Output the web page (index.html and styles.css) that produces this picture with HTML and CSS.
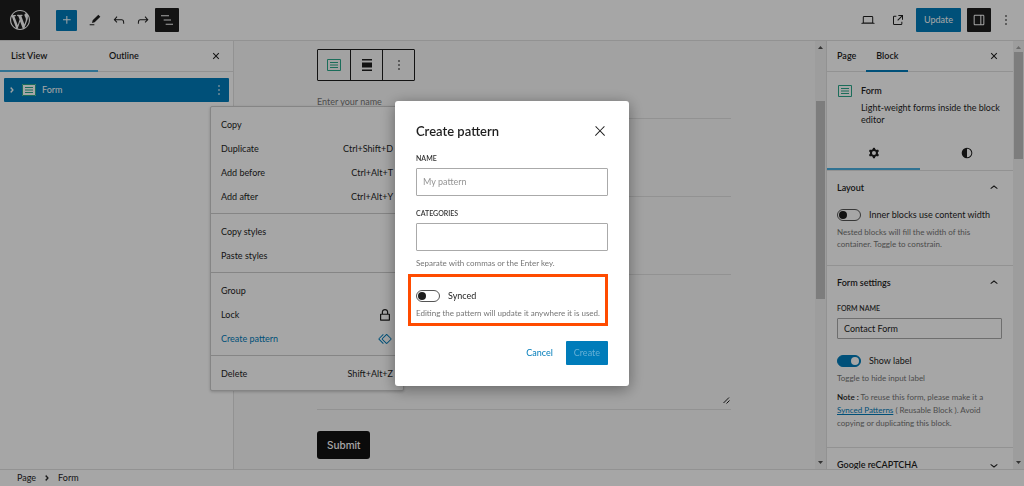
FILE: index.html
```html
<!DOCTYPE html>
<html lang="en">
<head>
<meta charset="utf-8">
<title>Edit Page</title>
<link rel="stylesheet" href="styles.css">
</head>
<body>
<svg class="sprite" aria-hidden="true">
  <symbol id="i-wp" viewBox="0 0 20 20"><path d="M20 10c0-5.51-4.49-10-10-10C4.48 0 0 4.49 0 10c0 5.52 4.48 10 10 10 5.51 0 10-4.48 10-10zM7.78 15.37L4.37 6.22c.55-.02 1.17-.08 1.17-.08.5-.06.44-1.13-.06-1.11 0 0-1.45.11-2.37.11-.18 0-.37 0-.58-.01C4.12 2.69 6.87 1.11 10 1.11c2.33 0 4.45.87 6.05 2.34-.68-.11-1.65.39-1.65 1.58 0 .74.45 1.36.9 2.1.35.61.55 1.36.55 2.46 0 1.49-1.4 5-1.4 5l-3.03-8.37c.54-.02.82-.17.82-.17.5-.05.44-1.25-.06-1.22 0 0-1.44.12-2.38.12-.87 0-2.33-.12-2.33-.12-.5-.03-.56 1.2-.06 1.22l.92.08 1.26 3.41zM17.41 10c.24-.64.74-1.87.43-4.25.7 1.29 1.05 2.71 1.05 4.25 0 3.29-1.73 6.24-4.4 7.78.97-2.59 1.94-5.2 2.92-7.78zM6.1 18.09C3.12 16.65 1.11 13.53 1.11 10c0-1.3.23-2.48.72-3.59C3.25 10.3 4.67 14.2 6.1 18.09zm4.03-6.63l2.58 6.98c-.86.29-1.76.45-2.71.45-.79 0-1.57-.11-2.29-.33.81-2.38 1.62-4.74 2.42-7.1z"/></symbol>
  <symbol id="i-plus" viewBox="0 0 24 24"><path d="M11 12.5V17.5H12.5V12.5H17.5V11H12.5V6H11V11H6V12.5H11Z"/></symbol>
  <symbol id="i-edit" viewBox="0 0 24 24"><path d="m20 7-3-3-8.5 8.5-1 4 4-1L20 7Zm-9 11.5H4V20h7v-1.5Z"/></symbol>
  <symbol id="i-undo" viewBox="0 0 24 24"><path d="M18.3 11.7c-.6-.6-1.4-.9-2.3-.9H6.7l2.9-3.3-1.1-1-4.5 5L8.5 16l1-1-2.7-2.7H16c.5 0 .9.2 1.3.5 1 1 1 3.4 1 4.5v.3h1.5v-.2c0-1.5 0-4.3-1.5-5.7z"/></symbol>
  <symbol id="i-redo" viewBox="0 0 24 24"><path d="M15.6 6.5l-1.1 1 2.9 3.3H8c-.9 0-1.7.3-2.3.9-1.4 1.5-1.4 4.2-1.4 5.6v.2h1.5v-.3c0-1.1 0-3.5 1-4.5.3-.3.7-.5 1.3-.5h9.2L14.5 15l1.1 1.1 4.6-4.6-4.6-5z"/></symbol>
  <symbol id="i-list" viewBox="0 0 24 24"><path d="M3 5h12v1.500H3V5Zm4 6.250h11v1.500H7v-1.500ZM21 17.500H10V19h11v-1.500Z"/></symbol>
  <symbol id="i-laptop" viewBox="0 0 24 24"><path d="M20.500 16h-.7V8c0-1.100-.9-2-2-2H6.200c-1.100 0-2 .9-2 2v8h-.7c-.8 0-1.500.7-1.500 1.500h20c0-.8-.7-1.500-1.500-1.500zM5.700 8c0-.3.200-.5.500-.5h11.600c.3 0 .5.200.5.500v7.600H5.700V8z"/></symbol>
  <symbol id="i-external" viewBox="0 0 24 24"><path d="M19.5 4.500h-7V6h4.440l-5.970 5.970 1.060 1.060L18 7.060v4.440h1.500v-7Zm-13 1a2 2 0 0 0-2 2v10a2 2 0 0 0 2 2h10a2 2 0 0 0 2-2v-3H17v3a.5.5 0 0 1-.5.5h-10a.5.5 0 0 1-.5-.5v-10a.5.5 0 0 1 .5-.5h3V5.500h-3Z"/></symbol>
  <symbol id="i-drawer" viewBox="0 0 24 24"><path d="M18 4H6c-1.100 0-2 .9-2 2v12c0 1.100.9 2 2 2h12c1.100 0 2-.9 2-2V6c0-1.100-.9-2-2-2zm-4 14.500H6c-.3 0-.5-.2-.5-.5V6c0-.3.200-.5.500-.5h8v13zm4.500-.5c0 .3-.2.500-.5.500h-2.500v-13H18c.3 0 .5.200.5.500v12z"/></symbol>
  <symbol id="i-more" viewBox="0 0 24 24"><path d="M13 19h-2v-2h2v2zm0-6h-2v-2h2v2zm0-6h-2V5h2v2z"/></symbol>
  <symbol id="i-close" viewBox="0 0 24 24"><path d="M13 11.800l6.100-6.300-1-1-6.100 6.200-6.100-6.200-1 1 6.100 6.300-6.500 6.700 1 1 6.500-6.600 6.500 6.600 1-1z"/></symbol>
  <symbol id="i-close-small" viewBox="0 0 24 24"><path d="M12 13.060l3.712 3.713 1.061-1.060L13.061 12l3.712-3.712-1.060-1.060L12 10.938 8.288 7.227l-1.061 1.060L10.939 12l-3.712 3.712 1.060 1.061L12 13.061z"/></symbol>
  <symbol id="i-cog" viewBox="0 0 24 24"><path fill-rule="evenodd" d="M10.289 4.836A1 1 0 0111.275 4h1.306a1 1 0 01.987.836l.244 1.466c.787.260 1.503.679 2.108 1.218l1.393-.522a1 1 0 011.216.437l.653 1.130a1 1 0 01-.230 1.273l-1.148.944a6.025 6.025 0 010 2.435l1.149.946a1 1 0 01.230 1.272l-.653 1.130a1 1 0 01-1.216.437l-1.394-.522c-.605.540-1.320.958-2.108 1.218l-.244 1.466a1 1 0 01-.987.836h-1.306a1 1 0 01-.986-.836l-.244-1.466a5.995 5.995 0 01-2.108-1.218l-1.394.522a1 1 0 01-1.217-.436l-.653-1.131a1 1 0 01.230-1.272l1.149-.946a6.026 6.026 0 010-2.435l-1.148-.944a1 1 0 01-.230-1.272l.653-1.131a1 1 0 011.217-.437l1.393.522a5.994 5.994 0 012.108-1.218l.244-1.466zM14.929 12a3 3 0 11-6 0 3 3 0 016 0z"/></symbol>
  <symbol id="i-styles" viewBox="0 0 24 24"><path fill-rule="evenodd" d="M20 12a8 8 0 1 1-16 0 8 8 0 0 1 16 0Zm-1.500 0a6.500 6.500 0 0 1-6.500 6.500v-13a6.500 6.500 0 0 1 6.500 6.500Z"/></symbol>
  <symbol id="i-up" viewBox="0 0 24 24"><path d="M6.500 12.400L12 8l5.500 4.400-.9 1.200L12 10l-4.500 3.600-1-1.200z"/></symbol>
  <symbol id="i-down" viewBox="0 0 24 24"><path d="M17.500 11.600L12 16l-5.500-4.400.9-1.200L12 14l4.500-3.600 1 1.200z"/></symbol>
  <symbol id="i-right" viewBox="0 0 24 24"><path d="M10.862 8.040L14.280 12.029L10.862 16.017L9.723 15.040L12.305 12.029L9.723 9.017Z" stroke="currentColor" stroke-width=".6"/></symbol>
  <symbol id="i-lock" viewBox="0 0 24 24"><path fill-rule="evenodd" d="M18.500 10h-1.700V7.500C16.800 4.900 14.700 3 12 3S7.200 4.900 7.200 7.500V10H5.500c-.6 0-1 .4-1 1v8.500c0 .6.400 1 1 1h13c.6 0 1-.4 1-1V11c0-.6-.4-1-1-1zM9 7.500c0-1.600 1.300-2.700 3-2.700s3 1.100 3 2.700V10H9V7.500zm8.700 11.200H6.300v-6.900h11.400v6.900z"/></symbol>
  <symbol id="i-pattern" viewBox="0 0 24 24"><path d="M21.300 10.800l-5.600-5.600c-.7-.7-1.800-.7-2.500 0l-5.600 5.600c-.7.700-.7 1.800 0 2.500l5.600 5.600c.3.300.8.500 1.200.5s.9-.2 1.200-.5l5.600-5.600c.8-.7.800-1.900.1-2.500zm-1 1.400l-5.600 5.600c-.1.100-.3.100-.4 0l-5.600-5.600c-.1-.1-.1-.3 0-.4l5.600-5.600s.1-.1.200-.1.100 0 .2.100l5.600 5.600c.1.100.1.300 0 .4zm-16.600-.4L10 5.500l-1-1-6.300 6.300c-.7.700-.7 1.800 0 2.500L9 19.500l1.100-1.100-6.300-6.300c-.2 0-.2-.2-.1-.3z"/></symbol>
  <symbol id="i-form" viewBox="0 0 14 12"><path fill="none" stroke="currentColor" d="M.5.500h13v11H.5zM3 3.500h8M3 6h8M3 8.500h8"/></symbol>
  <symbol id="i-align" viewBox="0 0 10 12"><path d="M0 0h10v1.500H0zM0 3.500h10v5H0zM0 10.500h10V12H0z"/></symbol>
  <symbol id="i-grip" viewBox="0 0 7 7"><path fill="none" stroke="currentColor" d="M.5 6L6 .5M3.500 6.500L6.500 3.500"/></symbol>
  <symbol id="i-tri-up" viewBox="0 0 5 3"><path d="M0 3L2.500 0 5 3z"/></symbol>
  <symbol id="i-tri-down" viewBox="0 0 5 3"><path d="M0 0h5L2.500 3z"/></symbol>
</svg>

<div class="editor">
  <header class="topbar">
    <a class="site-logo" href="#" aria-label="View pages"><svg><use href="#i-wp"/></svg></a>
    <div class="tools">
      <button class="tool tool-add" aria-label="Add block"><svg class="icon"><use href="#i-plus"/></svg></button>
      <button class="tool" aria-label="Tools"><svg class="icon"><use href="#i-edit"/></svg></button>
      <button class="tool" aria-label="Undo"><svg class="icon"><use href="#i-undo"/></svg></button>
      <button class="tool" aria-label="Redo"><svg class="icon"><use href="#i-redo"/></svg></button>
      <button class="tool tool-dark" aria-label="List view"><svg class="icon"><use href="#i-list"/></svg></button>
    </div>
    <div class="actions">
      <button class="tool" aria-label="Preview"><svg class="icon"><use href="#i-laptop"/></svg></button>
      <button class="tool" aria-label="View page"><svg class="icon"><use href="#i-external"/></svg></button>
      <button class="btn-primary">Update</button>
      <button class="tool tool-dark" aria-label="Settings"><svg class="icon"><use href="#i-drawer"/></svg></button>
      <button class="tool tool-more" aria-label="Options"><svg class="icon"><use href="#i-more"/></svg></button>
    </div>
  </header>

  <div class="workspace">
    <aside class="list-panel">
      <div class="tabs list-tabs">
        <button class="tab active">List View</button>
        <button class="tab">Outline</button>
        <button class="tab-close" aria-label="Close"><svg class="icon"><use href="#i-close-small"/></svg></button>
      </div>
      <div class="tree-row">
        <svg class="icon"><use href="#i-right"/></svg>
        <svg class="form-icon form-icon-filled"><use href="#i-form"/></svg>
        <a class="tree-label" href="#">Form</a>
        <button class="tree-more" aria-label="Options for Form"><svg class="icon"><use href="#i-more"/></svg></button>
      </div>
      <div class="menu" role="menu">
        <div class="menu-group">
          <button class="menu-item" role="menuitem">Copy</button>
          <button class="menu-item" role="menuitem">Duplicate<span>Ctrl+Shift+D</span></button>
          <button class="menu-item" role="menuitem">Add before<span>Ctrl+Alt+T</span></button>
          <button class="menu-item" role="menuitem">Add after<span>Ctrl+Alt+Y</span></button>
        </div>
        <div class="menu-group">
          <button class="menu-item" role="menuitem">Copy styles</button>
          <button class="menu-item" role="menuitem">Paste styles</button>
        </div>
        <div class="menu-group">
          <button class="menu-item" role="menuitem">Group</button>
          <button class="menu-item" role="menuitem">Lock<svg class="icon"><use href="#i-lock"/></svg></button>
          <button class="menu-item current" role="menuitem">Create pattern<svg class="icon"><use href="#i-pattern"/></svg></button>
        </div>
        <div class="menu-group">
          <button class="menu-item" role="menuitem">Delete<span>Shift+Alt+Z</span></button>
        </div>
      </div>
    </aside>

    <main class="canvas">
      <form class="page-form">
        <div class="block-toolbar">
          <button type="button" aria-label="Form"><svg class="form-icon"><use href="#i-form"/></svg></button>
          <button type="button" aria-label="Align"><svg class="align-icon"><use href="#i-align"/></svg></button>
          <button type="button" aria-label="Options"><svg class="icon"><use href="#i-more"/></svg></button>
        </div>
        <input class="field" type="text" placeholder="Enter your name" aria-label="Name">
        <input class="field field-tall" type="text" aria-label="Email">
        <input class="field field-tall" type="text" aria-label="Subject">
        <div class="message">
          <textarea class="field" aria-label="Message"></textarea>
          <svg class="grip"><use href="#i-grip"/></svg>
        </div>
        <button class="submit" type="button">Submit</button>
      </form>
    </main>
    <div class="scrollbar scrollbar-canvas" aria-hidden="true">
      <svg><use href="#i-tri-up"/></svg><div class="track"><div class="thumb"></div></div><svg><use href="#i-tri-down"/></svg>
    </div>

    <aside class="settings">
      <div class="tabs">
        <button class="tab">Page</button>
        <button class="tab active">Block</button>
        <button class="tab-close" aria-label="Close settings"><svg class="icon"><use href="#i-close-small"/></svg></button>
      </div>
      <div class="block-card">
        <svg class="form-icon"><use href="#i-form"/></svg>
        <div>
          <h2>Form</h2>
          <p>Light-weight forms inside the block editor</p>
        </div>
      </div>
      <div class="icon-tabs">
        <button class="active" aria-label="Settings"><svg class="icon"><use href="#i-cog"/></svg></button>
        <button aria-label="Styles"><svg class="icon"><use href="#i-styles"/></svg></button>
      </div>
      <section class="section">
        <h3><button>Layout<svg class="icon"><use href="#i-up"/></svg></button></h3>
        <label class="switch"><input type="checkbox">Inner blocks use content width</label>
        <p class="help">Nested blocks will fill the width of this container. Toggle to constrain.</p>
      </section>
      <section class="section section-form">
        <h3><button>Form settings<svg class="icon"><use href="#i-up"/></svg></button></h3>
        <label class="caps" for="form-name">FORM NAME</label>
        <input class="text-input" id="form-name" type="text" value="Contact Form">
        <label class="switch"><input type="checkbox" checked>Show label</label>
        <p class="help">Toggle to hide input label</p>
        <p class="help note"><b>Note :</b> To reuse this form, please make it a <a href="#">Synced Patterns</a> ( Reusable Block ). Avoid copying or duplicating this block.</p>
      </section>
      <section class="section">
        <h3><button>Google reCAPTCHA<svg class="icon"><use href="#i-down"/></svg></button></h3>
      </section>
    </aside>
    <div class="scrollbar scrollbar-settings" aria-hidden="true">
      <svg class="dim"><use href="#i-tri-up"/></svg><div class="track"><div class="thumb"></div></div><svg><use href="#i-tri-down"/></svg>
    </div>
  </div>

  <footer class="crumbs">
    <a href="#">Page</a>
    <svg class="icon"><use href="#i-right"/></svg>
    <span>Form</span>
  </footer>
</div>

<div class="overlay">
  <form class="modal" role="dialog" aria-labelledby="modal-title">
    <header>
      <h1 id="modal-title">Create pattern</h1>
      <button type="button" aria-label="Close"><svg class="icon"><use href="#i-close"/></svg></button>
    </header>
    <label class="caps" for="pattern-name">NAME</label>
    <input class="text-input" id="pattern-name" type="text" placeholder="My pattern">
    <label class="caps" for="pattern-cats">CATEGORIES</label>
    <input class="text-input" id="pattern-cats" type="text">
    <p class="help">Separate with commas or the Enter key.</p>
    <div class="synced">
      <label class="switch"><input type="checkbox">Synced</label>
      <p class="help">Editing the pattern will update it anywhere it is used.</p>
    </div>
    <div class="modal-actions">
      <button class="btn-link" type="button">Cancel</button>
      <button class="btn-primary" type="submit" disabled>Create</button>
    </div>
  </form>
</div>
</body>
</html>
```
FILE: styles.css
```css
:root {
  --blue: #007cba;
  --ink: #1e1e1e;
  --muted: #757575;
  --line: #e0e0e0;
  --teal: #2aa88a;
}

* { box-sizing: border-box; }

body {
  margin: 0;
  color: var(--ink);
  background: #fff;
  font: 9px/12px Lato, "Open Sans", sans-serif;
}

button, input, textarea {
  margin: 0;
  padding: 0;
  border: 0;
  background: none;
  color: inherit;
  font: inherit;
}

h1, h2, h3, p { margin: 0; font-size: inherit; font-weight: 600; }
p { font-weight: 400; }
svg { display: block; flex: none; fill: currentColor; }
.sprite { position: absolute; width: 0; height: 0; }
.icon { width: 16px; height: 16px; }
.form-icon { width: 14px; height: 12px; color: var(--teal); }
.form-icon-filled { background: #fff; }
.align-icon { width: 10px; height: 12px; }

.editor { display: flex; flex-direction: column; height: 100vh; overflow: hidden; }

/* Top bar */
.topbar { display: flex; align-items: center; flex: none; height: 41px; border-bottom: 1px solid var(--line); }
.site-logo { display: grid; place-items: center; width: 40px; height: 40px; background: var(--ink); color: #fff; }
.site-logo svg { width: 20px; height: 20px; }
.tools { display: flex; align-items: center; margin-left: 16px; }
.actions { display: flex; align-items: center; margin-left: auto; gap: 6px; }
.tool { display: grid; place-items: center; width: 24px; height: 24px; border-radius: 1px; }
.tool-add { width: 21px; height: 21px; margin-right: 6px; background: var(--blue); color: #fff; }
.tool-dark { background: var(--ink); color: #fff; }
.tool-more { width: 18px; margin-right: 9px; }
.btn-primary { height: 24px; padding: 0 8px; border-radius: 1px; background: var(--blue); color: #fff; }

/* Main columns */
.workspace { display: flex; flex: 1; min-height: 0; }

.tabs { display: flex; flex: none; height: 31px; border-bottom: 1px solid var(--line); }
.tab { height: 31px; padding: 0 11px; border-bottom: 2px solid transparent; font-weight: 600; }
.tab.active { border-color: var(--blue); }
.tab-close { margin: 0 11px 0 auto; }

.list-panel { position: relative; flex: none; width: 234px; border-right: 1px solid var(--line); }
.list-tabs .tab { text-align: left; }
.list-tabs .tab.active { width: 98px; border-color: #4ab0e0; }
.list-tabs .tab-close { margin-right: 9px; }
.tree-row { display: flex; align-items: center; height: 24px; margin: 6px 4px; padding-right: 2px; border-radius: 1px; background: var(--blue); color: #fff; }
.tree-row .form-icon { margin: 0 6px 0 2px; }
.tree-label { color: inherit; text-decoration: none; }
.tree-more { margin-left: auto; }

.menu { position: absolute; z-index: 1; top: 65px; left: 210px; width: 194px; border: 1px solid #ccc; border-radius: 2px; background: #fff; box-shadow: 0 1px 3px rgba(0, 0, 0, .2); }
.menu-group { padding: 6px 10px 4px; border-bottom: 1px solid #ccc; }
.menu-group:last-child { border-bottom: 0; }
.menu-item { display: flex; align-items: center; justify-content: space-between; width: 100%; height: 24px; }
.menu-item.current { color: var(--blue); }

.canvas { flex: 1; min-width: 0; padding: 8px 84px 0 83px; background: #f9f9f9; }
.page-form { display: flex; flex-direction: column; align-items: stretch; }
.block-toolbar { display: flex; align-self: flex-start; height: 32px; margin-bottom: 8px; border: 1px solid var(--ink); border-radius: 1px; }
.block-toolbar button { display: grid; place-items: center; width: 32px; }
.block-toolbar button + button { border-left: 1px solid var(--ink); }
.field { display: block; width: 100%; height: 30px; padding: 0 0 5px; border-bottom: 1px solid var(--line); resize: none; }
.field::placeholder { color: var(--muted); opacity: 1; }
.field-tall { height: 78px; }
.message { position: relative; }
.message .field { height: 135px; }
.grip { position: absolute; right: 1px; bottom: 6px; width: 7px; height: 7px; }
.submit { align-self: flex-start; height: 28px; margin-top: 21px; padding: 0 10px; border-radius: 3px; background: #111; color: #fff; font: 500 10px/12px Inter, sans-serif; }

.scrollbar { display: flex; flex: none; flex-direction: column; align-items: center; width: 11px; padding: 5px 1px; background: #f1f1f1; color: #505050; }
.scrollbar svg { width: 5px; height: 3px; }
.scrollbar .dim { color: #a3a3a3; }
.track { flex: 1; width: 100%; }
.thumb { width: 100%; background: #c1c1c1; }
.scrollbar-canvas .thumb { height: 48%; margin-top: 52px; }
.scrollbar-settings .thumb { height: 26%; margin-top: 3px; }

/* Block settings */
.settings { flex: none; width: 187px; overflow: hidden; border-left: 1px solid var(--line); }
.settings .tab { padding: 0 10px; }
.block-card { display: flex; gap: 9px; padding: 13px 11px 11px; }
.block-card h2 { margin-bottom: 5px; }
.icon-tabs { display: flex; border-bottom: 1px solid var(--line); }
.icon-tabs button { display: grid; flex: 1; place-items: center; height: 33px; border-bottom: 2px solid transparent; }
.icon-tabs .active { border-color: #4ab0e0; }
.section { padding: 0 11px 15px 10px; border-bottom: 1px solid var(--line); }
.section-form { padding-bottom: 17px; }
.section h3 button { display: flex; align-items: center; justify-content: space-between; width: 100%; height: 34px; }
.help { margin-top: 1px; color: var(--muted); font-size: 8px; }
.note { margin-top: 7px; line-height: 13px; }
.note b { color: var(--ink); font-weight: 600; }
.note a { color: var(--blue); }
.caps { display: block; color: #333; font-size: 7px; font-weight: 600; }

.switch { display: flex; align-items: center; gap: 8px; height: 20px; }
.switch input { display: flex; flex: none; align-items: center; width: 24px; height: 12px; margin: 0; padding: 1px; border: 1px solid #555; border-radius: 6px; appearance: none; }
.switch input::before { content: ""; width: 8px; height: 8px; border-radius: 50%; background: var(--ink); }
.switch input:checked { justify-content: flex-end; border-color: var(--blue); background: var(--blue); }
.switch input:checked::before { background: #fff; }

.text-input { display: block; width: 100%; height: 21px; padding: 0 6px; border: 1px solid #aaa; border-radius: 1px; }
.text-input::placeholder { color: #949494; opacity: 1; }
.section .caps { margin: 2px 0 4px; }
.section .text-input { margin-bottom: 12px; }

/* Breadcrumbs */
.crumbs { display: flex; align-items: center; flex: none; gap: 3px; height: 17px; padding-left: 17px; border-top: 1px solid var(--line); }
.crumbs a { color: inherit; text-decoration: none; }

/* Dialog */
.overlay { position: fixed; z-index: 2; inset: 0; display: grid; place-items: center; background: rgba(0, 0, 0, .35); }
.modal { width: 234px; padding: 21px; border-radius: 3px; background: #fff; box-shadow: 0 3px 15px rgba(0, 0, 0, .4); }
.modal header { display: flex; align-items: center; justify-content: space-between; height: 18px; margin-bottom: 12px; }
.modal h1 { font-size: 13px; }
.modal .text-input { height: 28px; margin: 4px 0 11px; }
.modal .text-input + .help { margin-top: -5px; }
.synced { margin: 5px 0 0 -8px; padding: 9px 0 4px 5px; border: 3px solid #ff4b00; }
.modal-actions { display: flex; justify-content: flex-end; margin-top: 15px; }
.btn-link { padding: 0 13px; color: var(--blue); }
.btn-primary:disabled { color: #66b0d6; }
```
